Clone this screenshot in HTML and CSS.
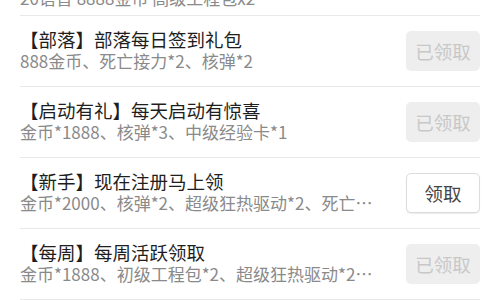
FILE: index.html
```
<!DOCTYPE html>
<html lang="zh-CN">
<head>
    <meta charset="UTF-8">
    <meta name="viewport" content="width=device-width, initial-scale=1.0">
    <title>礼包领取</title>
    <link rel="stylesheet" href="styles.css">
</head>
<body>
    <div class="gift-list">
        <div class="gift-item gift-item-top">
            <div class="gift-info">
                <div class="gift-title">【VIP】会员专属礼包</div>
                <div class="gift-desc">20语音 8888金币 高级工程包x2</div>
            </div>
            <button class="btn btn-done">已领取</button>
        </div>

        <div class="gift-item">
            <div class="gift-info">
                <div class="gift-title">【部落】部落每日签到礼包</div>
                <div class="gift-desc">888金币、死亡接力*2、核弹*2</div>
            </div>
            <button class="btn btn-done">已领取</button>
        </div>

        <div class="gift-item">
            <div class="gift-info">
                <div class="gift-title">【启动有礼】每天启动有惊喜</div>
                <div class="gift-desc">金币*1888、核弹*3、中级经验卡*1</div>
            </div>
            <button class="btn btn-done">已领取</button>
        </div>

        <div class="gift-item">
            <div class="gift-info">
                <div class="gift-title">【新手】现在注册马上领</div>
                <div class="gift-desc">金币*2000、核弹*2、超级狂热驱动*2、死亡接力*2</div>
            </div>
            <button class="btn btn-get">领取</button>
        </div>

        <div class="gift-item">
            <div class="gift-info">
                <div class="gift-title">【每周】每周活跃领取</div>
                <div class="gift-desc">金币*1888、初级工程包*2、超级狂热驱动*2、核弹*1</div>
            </div>
            <button class="btn btn-done">已领取</button>
        </div>
    </div>
</body>
</html>
```

FILE: styles.css
```
body {
    margin: 0;
    padding: 0;
    background-color: #fff;
    font-family: "Noto Sans CJK SC", "Noto Sans", sans-serif;
    overflow: hidden;
}

.gift-list {
    margin: -55px 20px 0 20px;
}

.gift-item {
    display: flex;
    align-items: center;
    height: 70px;
    border-bottom: 1px solid #e8e8e8;
}

.gift-info {
    flex: 1;
    min-width: 0;
    padding-right: 26px;
    padding-bottom: 2px;
}

/* 顶部被滚动遮住的一行，文字更靠下 */
.gift-item-top .gift-info {
    padding-bottom: 0;
    margin-top: 13px;
}

.gift-title {
    font-size: 18.5px;
    line-height: 22px;
    color: #1e1e1e;
    white-space: nowrap;
}

.gift-desc {
    font-size: 17px;
    line-height: 22px;
    color: #8a8a8a;
    white-space: nowrap;
    overflow: hidden;
    text-overflow: ellipsis;
}

.btn {
    width: 74px;
    height: 40px;
    font-family: inherit;
    font-size: 18.5px;
    border-radius: 5px;
    padding: 0;
    flex-shrink: 0;
}

.btn-done {
    background-color: #eeeeee;
    color: #c8c8c8;
    border: none;
}

.btn-get {
    background-color: #fff;
    color: #444;
    border: 1px solid #dcdcdc;
    box-shadow: 0 1px 1px rgba(0, 0, 0, 0.08);
    cursor: pointer;
}
```
